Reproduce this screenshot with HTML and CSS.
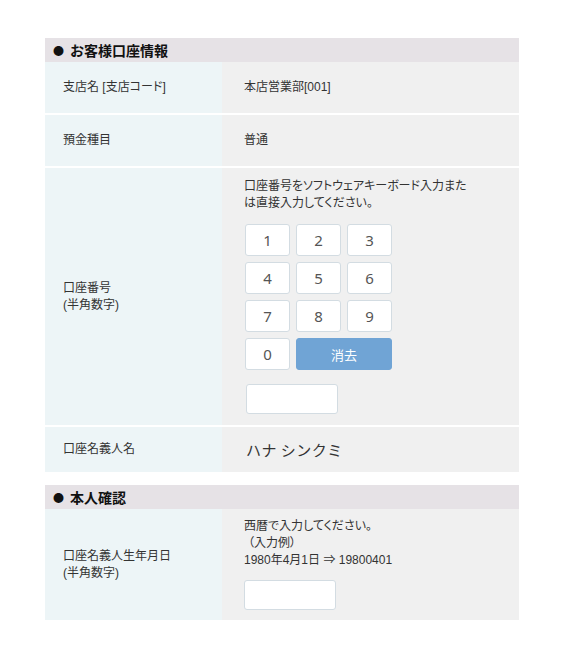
FILE: index.html
```html
<!DOCTYPE html>
<html lang="ja">
<head>
    <meta charset="UTF-8">
    <meta name="viewport" content="width=device-width, initial-scale=1.0">
    <title>お客様口座情報</title>
    <link rel="stylesheet" href="styles.css">
</head>
<body>
    <div class="page">
        <section class="block">
            <h2 class="block-title"><span class="dot">●</span>お客様口座情報</h2>
            <div class="row">
                <div class="label">支店名 [支店コード]</div>
                <div class="value">本店営業部[001]</div>
            </div>
            <div class="row">
                <div class="label">預金種目</div>
                <div class="value">普通</div>
            </div>
            <div class="row">
                <div class="label">口座番号<br>(半角数字)</div>
                <div class="value value-keypad">
                    <p class="note">口座番号をソフトウェアキーボード入力または直接入力してください。</p>
                    <div class="keypad">
                        <button class="key">1</button>
                        <button class="key">2</button>
                        <button class="key">3</button>
                        <button class="key">4</button>
                        <button class="key">5</button>
                        <button class="key">6</button>
                        <button class="key">7</button>
                        <button class="key">8</button>
                        <button class="key">9</button>
                        <button class="key">0</button>
                        <button class="key key-clear">消去</button>
                    </div>
                    <input type="text" class="text-input account-input">
                </div>
            </div>
            <div class="row">
                <div class="label">口座名義人名</div>
                <div class="value value-name">ハナ シンクミ</div>
            </div>
        </section>

        <section class="block">
            <h2 class="block-title"><span class="dot">●</span>本人確認</h2>
            <div class="row">
                <div class="label">口座名義人生年月日<br>(半角数字)</div>
                <div class="value value-birth">
                    <p class="note">西暦で入力してください。<br><span class="example">（入力例）</span><br>1980年4月1日 ⇒ 19800401</p>
                    <input type="text" class="text-input birth-input">
                </div>
            </div>
        </section>
    </div>
</body>
</html>
```

FILE: styles.css
```css
html, body {
    margin: 0;
    padding: 0;
    background: #ffffff;
}

body {
    font-family: "Liberation Sans", "Noto Sans CJK JP", sans-serif;
    font-feature-settings: "palt";
    font-size: 12px;
    line-height: 17px;
    color: #333333;
}

.page {
    width: 474px;
    margin: 38px 0 0 45px;
}

.block + .block {
    margin-top: 13px;
}

.block-title {
    margin: 0;
    height: 24px;
    line-height: 24px;
    background-color: #e6e2e6;
    font-family: "Noto Sans CJK JP", sans-serif;
    font-size: 14px;
    font-weight: bold;
    color: #111111;
    padding-left: 8px;
    font-feature-settings: normal;
}

.dot {
    font-size: 11px;
    margin-right: 6px;
    position: relative;
    top: -1px;
}

.row {
    display: flex;
    border-bottom: 2px solid #ffffff;
}

.row:last-child {
    border-bottom: none;
}

.label {
    width: 159px;
    flex-shrink: 0;
    background-color: #edf5f7;
    padding-left: 18px;
    display: flex;
    align-items: center;
}

.value {
    flex: 1;
    background-color: #f0f0f0;
    padding: 17px 0 17px 22px;
}

.value-keypad {
    padding: 10px 0 11px 22px;
}

.value-birth {
    padding: 9px 0 10px 22px;
}

.value-name {
    padding: 12px 0 12px 24px;
    font-family: "Noto Sans CJK JP", sans-serif;
    font-feature-settings: normal;
    font-size: 15px;
    line-height: 21px;
    letter-spacing: 0.5px;
}

.note {
    margin: 0;
    width: 232px;
}

.example {
    padding-left: 4px;
}

.keypad {
    display: grid;
    grid-template-columns: repeat(3, 45px);
    grid-auto-rows: 32px;
    gap: 6px;
    margin: 12px 0 0 1px;
}

.key {
    background-color: #ffffff;
    border: 1px solid #d3dce2;
    border-radius: 3px;
    font-family: "Noto Sans", sans-serif;
    font-size: 15px;
    color: #555555;
    padding: 0;
}

.key-clear {
    grid-column: span 2;
    background-color: #70a4d5;
    border-color: #70a4d5;
    color: #ffffff;
    font-family: "Noto Sans CJK JP", sans-serif;
    font-size: 13px;
}

.text-input {
    display: block;
    box-sizing: border-box;
    height: 30px;
    border: 1px solid #d3dce2;
    border-radius: 3px;
    background-color: #ffffff;
}

.account-input {
    width: 92px;
    margin: 14px 0 0 2px;
}

.birth-input {
    width: 92px;
    margin: 11px 0 0 0;
}
```
